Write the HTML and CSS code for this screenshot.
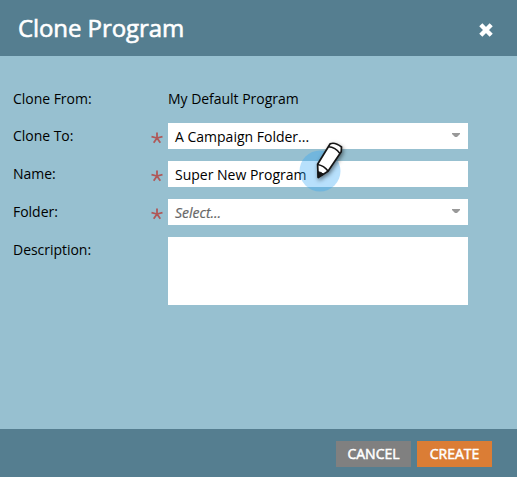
FILE: index.html
```html
<!DOCTYPE html>
<html lang="en">
<head>
<meta charset="utf-8">
<title>Clone Program</title>
<link rel="stylesheet" href="styles.css">
</head>
<body>
<div class="dialog">
  <header class="header">
    <h1 class="title">Clone Program</h1>
    <svg class="close" viewBox="0 0 16 16"><path d="M2.8 2.8L13.2 13.2M13.2 2.8L2.8 13.2"/></svg>
  </header>
  <main class="form">
    <div class="row static"><span class="label">Clone From:</span><span class="value">My Default Program</span></div>
    <div class="row"><span class="label">Clone To:</span><svg class="star" viewBox="0 0 12 12"><path d="M6 6V.5M6 6L.5 4.6M6 6L11.5 4.6M6 6L2.7 10.8M6 6L9.3 10.8"/></svg><div class="field"><span class="folder-text">A Campaign Folder...</span><svg class="arrow" viewBox="0 0 8 4"><path d="M0 0H8V1L5 4H3L0 1Z"/></svg></div></div>
    <div class="row"><span class="label">Name:</span><svg class="star" viewBox="0 0 12 12"><path d="M6 6V.5M6 6L.5 4.6M6 6L11.5 4.6M6 6L2.7 10.8M6 6L9.3 10.8"/></svg><div class="field"><span class="name-text">Super New Program</span>
      <svg class="pencil" viewBox="0 0 52 56">
        <circle cx="21" cy="33" r="20.5"/>
        <g class="pencil-body">
          <path class="barrel" d="M31.2 5.8Q36 3.8 42.5 9L42.2 13.8L29 33.2L19.2 39.6L18.6 26.2Z"/>
          <path class="line" d="M29.3 8.8Q36.5 9.2 40.9 15.5M18.6 26.5Q25 27.7 29 33"/>
          <path class="tip" d="M19 33.7Q22.2 34 24.5 36.2L19 39.6Z"/>
        </g>
      </svg></div></div>
    <div class="row"><span class="label">Folder:</span><svg class="star" viewBox="0 0 12 12"><path d="M6 6V.5M6 6L.5 4.6M6 6L11.5 4.6M6 6L2.7 10.8M6 6L9.3 10.8"/></svg><div class="field"><span class="placeholder">Select...</span><svg class="arrow" viewBox="0 0 8 4"><path d="M0 0H8V1L5 4H3L0 1Z"/></svg></div></div>
    <div class="row"><span class="label">Description:</span><div class="field area"></div></div>
  </main>
  <footer class="footer"><button class="button">CANCEL</button><button class="button primary">CREATE</button></footer>
</div>
</body>
</html>
```
FILE: styles.css
```css
* { box-sizing: border-box; }
body { margin: 0; font: 14px/26px "Open Sans", sans-serif; color: #000; }
.dialog { display: flex; flex-direction: column; width: 517px; height: 477px; background: #97c0d0; }
.header { display: flex; align-items: center; justify-content: space-between; height: 56px; padding: 0 23px 0 18px; background: #557e90; }
.title { margin: 0; padding-bottom: 0; font-size: 24px; line-height: 32px; font-weight: 400; letter-spacing: -.08px; color: #fff; -webkit-text-stroke: .6px #fff; }
.close { width: 16px; height: 16px; margin-top: 4px; fill: none; stroke: #fff; stroke-width: 4.4; }
.form { flex: 1; display: flex; flex-direction: column; gap: 12px; padding: 30px 49px 0 13px; }
.row { display: grid; grid-template-columns: 138px 17px 300px; align-items: start; }
.static { height: 25px; }
.label, .value { white-space: nowrap; letter-spacing: -.03px; }
.value, .field { grid-column: 3; }
.star { width: 12px; height: 12px; margin-top: 9px; fill: none; stroke: #b05858; stroke-width: 1.8; }
.field { position: relative; display: flex; justify-content: space-between; height: 26px; padding: 1px 8px 0 7px; background: #fff; white-space: nowrap; }
.area { height: 68px; }
.arrow { width: 8px; height: 4px; margin-top: 9px; fill: #999; }
.placeholder { font-style: italic; color: #666; -webkit-text-stroke: .2px #666; }
.pencil { position: absolute; left: 131px; top: -23px; width: 52px; height: 56px; overflow: visible; }
.pencil circle { fill: #2ba5f5; fill-opacity: .34; }
.pencil-body { filter: drop-shadow(1px 2px 2px rgba(0, 0, 0, .5)); }
.barrel { fill: #fff; stroke: #151515; stroke-width: 1.7; stroke-linejoin: round; }
.line { fill: none; stroke: #151515; stroke-width: 1.6; }
.tip { fill: #151515; stroke: #151515; }
.footer { display: flex; gap: 6px; justify-content: flex-end; height: 48px; padding: 12px 25px 0 0; background: #557e90; }
.button { width: 75px; height: 26px; padding: 0; border: 0; background: #808080; color: #fff; font: 14px/26px "Open Sans", sans-serif; -webkit-text-stroke: .5px #fff; }
.primary { background: #db7d35; }
```
